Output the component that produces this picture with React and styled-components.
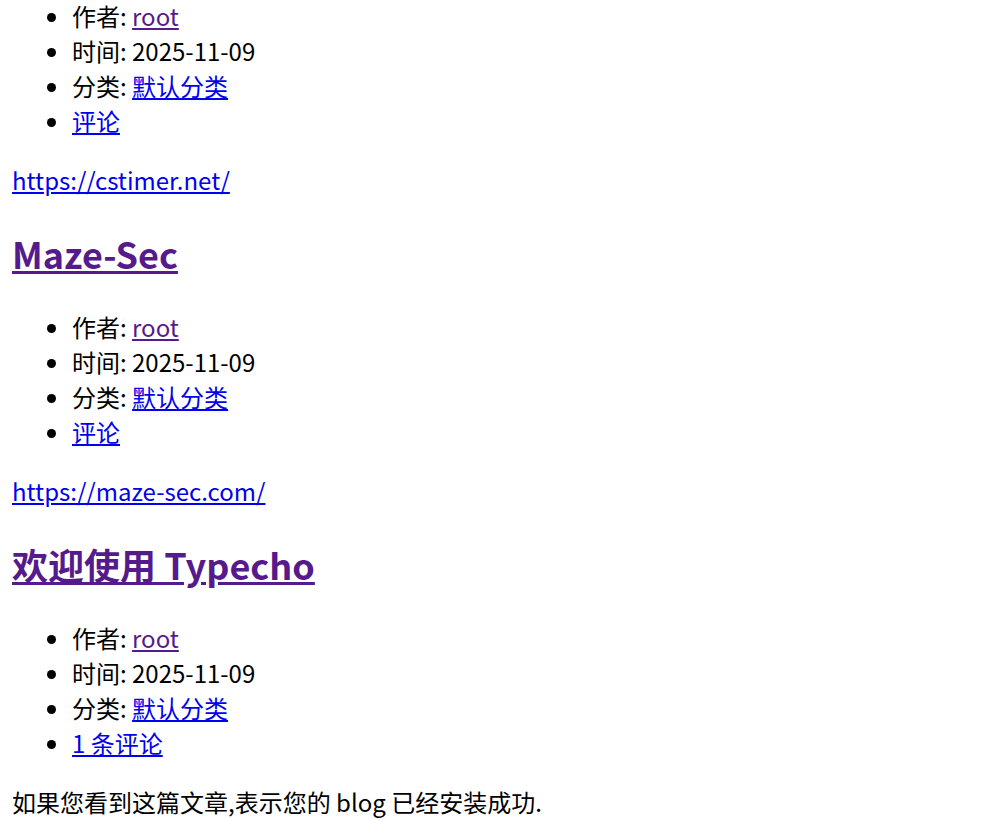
import React from "react"
import styled, { createGlobalStyle } from "styled-components"

const GlobalStyle = createGlobalStyle`
  html, body {
    margin: 0;
    padding: 0;
    background: #fff;
  }
  body {
    font-family: "Noto Sans CJK SC", "Noto Sans", sans-serif;
    font-size: 24px;
    color: #000;
  }
`

const Page = styled.div`
  padding: 0 12px;
`

const Article = styled.article`
  &:first-child > ul:first-child {
    margin-top: -2px;
  }
`

const Title = styled.h2`
  font-size: 36px;
  font-weight: 700;
  margin: 30px 0;
`

const Meta = styled.ul`
  margin: 24px 0;
  padding-left: 60px;
  list-style: disc;
`

const Item = styled.li``

const Body = styled.p`
  margin: 24px 0;
`

const Link = styled.a`
  color: ${props => (props.$visited ? "#551a8b" : "#0000ee")};
  text-decoration: underline;
`

const posts = [
  { title: null, comments: "评论", body: <Link href="#">https://cstimer.net/</Link> },
  { title: "Maze-Sec", comments: "评论", body: <Link href="#">https://maze-sec.com/</Link> },
  { title: "欢迎使用 Typecho", comments: "1 条评论", body: "如果您看到这篇文章,表示您的 blog 已经安装成功." },
]

const App = () => (
  <>
    <GlobalStyle />
    <Page>
      {posts.map((post, i) => (
        <Article key={i}>
          {post.title && (
            <Title>
              <Link href="#" $visited>{post.title}</Link>
            </Title>
          )}
          <Meta>
            <Item>作者: <Link href="#" $visited>root</Link></Item>
            <Item>时间: 2025-11-09</Item>
            <Item>分类: <Link href="#">默认分类</Link></Item>
            <Item><Link href="#">{post.comments}</Link></Item>
          </Meta>
          <Body>{post.body}</Body>
        </Article>
      ))}
    </Page>
  </>
)

export default App
